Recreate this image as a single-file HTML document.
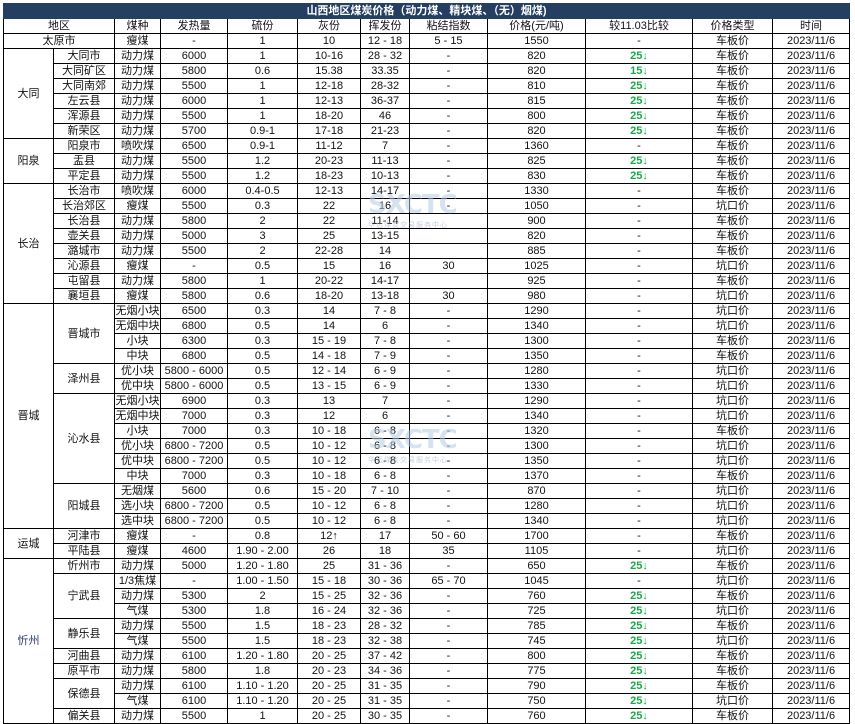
<!DOCTYPE html>
<html><head><meta charset="utf-8"><style>
body{margin:0;background:#fff;width:855px;height:712px;overflow:hidden;position:relative;font-family:"Liberation Sans","Noto Sans CJK SC",sans-serif;}
table{position:absolute;left:3px;top:3px;border-collapse:collapse;table-layout:fixed;width:846px;font-size:11px;color:#111;}
td{border:1px solid #000;padding:0;height:14px;line-height:14px;text-align:center;white-space:nowrap;overflow:hidden;}
tr{height:15px}
.t td{background:#243f62;color:#fff;font-weight:bold;border-color:#243f62;}
.g{color:#1aa84a;font-weight:bold;}
.wm{position:absolute;color:#b8cce4;font:bold 26px "DejaVu Sans",sans-serif;opacity:.55;letter-spacing:-1px;}
.wm span{display:block;font:7px "Noto Sans CJK SC",sans-serif;letter-spacing:1px;color:#9ab;}
</style></head><body>
<table>
<colgroup><col style="width:50px"><col style="width:61px"><col style="width:46px"><col style="width:67px"><col style="width:70px"><col style="width:63px"><col style="width:49px"><col style="width:78px"><col style="width:98px"><col style="width:107px"><col style="width:80px"><col style="width:77px"></colgroup>
<tr class="t"><td colspan="12">山西地区煤炭价格（动力煤、精块煤、（无）烟煤)</td></tr>
<tr><td colspan="2">地区</td><td>煤种</td><td>发热量</td><td>硫份</td><td>灰份</td><td>挥发份</td><td>粘结指数</td><td>价格(元/吨)</td><td>较11.03比较</td><td>价格类型</td><td>时间</td></tr>
<tr><td colspan="2">太原市</td><td>瘦煤</td><td>-</td><td>1</td><td>10</td><td>12 - 18</td><td>5 - 15</td><td>1550</td><td>-</td><td>车板价</td><td>2023/11/6</td></tr>
<tr><td rowspan="6">大同</td><td>大同市</td><td>动力煤</td><td>6000</td><td>1</td><td>10-16</td><td>28 - 32</td><td>-</td><td>820</td><td class="g">25↓</td><td>车板价</td><td>2023/11/6</td></tr>
<tr><td>大同矿区</td><td>动力煤</td><td>5800</td><td>0.6</td><td>15.38</td><td>33.35</td><td>-</td><td>820</td><td class="g">15↓</td><td>车板价</td><td>2023/11/6</td></tr>
<tr><td>大同南郊</td><td>动力煤</td><td>5500</td><td>1</td><td>12-18</td><td>28-32</td><td>-</td><td>810</td><td class="g">25↓</td><td>车板价</td><td>2023/11/6</td></tr>
<tr><td>左云县</td><td>动力煤</td><td>6000</td><td>1</td><td>12-13</td><td>36-37</td><td>-</td><td>815</td><td class="g">25↓</td><td>车板价</td><td>2023/11/6</td></tr>
<tr><td>浑源县</td><td>动力煤</td><td>5500</td><td>1</td><td>18-20</td><td>46</td><td>-</td><td>800</td><td class="g">25↓</td><td>车板价</td><td>2023/11/6</td></tr>
<tr><td>新荣区</td><td>动力煤</td><td>5700</td><td>0.9-1</td><td>17-18</td><td>21-23</td><td>-</td><td>820</td><td class="g">25↓</td><td>车板价</td><td>2023/11/6</td></tr>
<tr><td rowspan="3">阳泉</td><td>阳泉市</td><td>喷吹煤</td><td>6500</td><td>0.9-1</td><td>11-12</td><td>7</td><td>-</td><td>1360</td><td>-</td><td>车板价</td><td>2023/11/6</td></tr>
<tr><td>盂县</td><td>动力煤</td><td>5500</td><td>1.2</td><td>20-23</td><td>11-13</td><td>-</td><td>825</td><td class="g">25↓</td><td>车板价</td><td>2023/11/6</td></tr>
<tr><td>平定县</td><td>动力煤</td><td>5500</td><td>1.2</td><td>18-23</td><td>10-13</td><td>-</td><td>830</td><td class="g">25↓</td><td>车板价</td><td>2023/11/6</td></tr>
<tr><td rowspan="8">长治</td><td>长治市</td><td>喷吹煤</td><td>6000</td><td>0.4-0.5</td><td>12-13</td><td>14-17</td><td>-</td><td>1330</td><td>-</td><td>车板价</td><td>2023/11/6</td></tr>
<tr><td>长治郊区</td><td>瘦煤</td><td>5500</td><td>0.3</td><td>22</td><td>16</td><td>-</td><td>1050</td><td>-</td><td>坑口价</td><td>2023/11/6</td></tr>
<tr><td>长治县</td><td>动力煤</td><td>5800</td><td>2</td><td>22</td><td>11-14</td><td></td><td>900</td><td>-</td><td>车板价</td><td>2023/11/6</td></tr>
<tr><td>壶关县</td><td>动力煤</td><td>5000</td><td>3</td><td>25</td><td>13-15</td><td></td><td>820</td><td>-</td><td>车板价</td><td>2023/11/6</td></tr>
<tr><td>潞城市</td><td>动力煤</td><td>5500</td><td>2</td><td>22-28</td><td>14</td><td></td><td>885</td><td>-</td><td>车板价</td><td>2023/11/6</td></tr>
<tr><td>沁源县</td><td>瘦煤</td><td>-</td><td>0.5</td><td>15</td><td>16</td><td>30</td><td>1025</td><td>-</td><td>坑口价</td><td>2023/11/6</td></tr>
<tr><td>屯留县</td><td>动力煤</td><td>5800</td><td>1</td><td>20-22</td><td>14-17</td><td></td><td>925</td><td>-</td><td>车板价</td><td>2023/11/6</td></tr>
<tr><td>襄垣县</td><td>瘦煤</td><td>5800</td><td>0.6</td><td>18-20</td><td>13-18</td><td>30</td><td>980</td><td>-</td><td>坑口价</td><td>2023/11/6</td></tr>
<tr><td rowspan="15">晋城</td><td rowspan="4">晋城市</td><td>无烟小块</td><td>6500</td><td>0.3</td><td>14</td><td>7 - 8</td><td>-</td><td>1290</td><td>-</td><td>坑口价</td><td>2023/11/6</td></tr>
<tr><td>无烟中块</td><td>6800</td><td>0.5</td><td>14</td><td>6</td><td>-</td><td>1340</td><td>-</td><td>坑口价</td><td>2023/11/6</td></tr>
<tr><td>小块</td><td>6300</td><td>0.3</td><td>15 - 19</td><td>7 - 8</td><td>-</td><td>1300</td><td>-</td><td>车板价</td><td>2023/11/6</td></tr>
<tr><td>中块</td><td>6800</td><td>0.5</td><td>14 - 18</td><td>7 - 9</td><td>-</td><td>1350</td><td>-</td><td>车板价</td><td>2023/11/6</td></tr>
<tr><td rowspan="2">泽州县</td><td>优小块</td><td>5800 - 6000</td><td>0.5</td><td>12 - 14</td><td>6 - 9</td><td>-</td><td>1280</td><td>-</td><td>坑口价</td><td>2023/11/6</td></tr>
<tr><td>优中块</td><td>5800 - 6000</td><td>0.5</td><td>13 - 15</td><td>6 - 9</td><td>-</td><td>1330</td><td>-</td><td>坑口价</td><td>2023/11/6</td></tr>
<tr><td rowspan="6">沁水县</td><td>无烟小块</td><td>6900</td><td>0.3</td><td>13</td><td>7</td><td>-</td><td>1290</td><td>-</td><td>坑口价</td><td>2023/11/6</td></tr>
<tr><td>无烟中块</td><td>7000</td><td>0.3</td><td>12</td><td>6</td><td>-</td><td>1340</td><td>-</td><td>坑口价</td><td>2023/11/6</td></tr>
<tr><td>小块</td><td>7000</td><td>0.3</td><td>10 - 18</td><td>6 - 8</td><td>-</td><td>1320</td><td>-</td><td>车板价</td><td>2023/11/6</td></tr>
<tr><td>优小块</td><td>6800 - 7200</td><td>0.5</td><td>10 - 12</td><td>6 - 8</td><td>-</td><td>1300</td><td>-</td><td>坑口价</td><td>2023/11/6</td></tr>
<tr><td>优中块</td><td>6800 - 7200</td><td>0.5</td><td>10 - 12</td><td>6 - 8</td><td>-</td><td>1350</td><td>-</td><td>坑口价</td><td>2023/11/6</td></tr>
<tr><td>中块</td><td>7000</td><td>0.3</td><td>10 - 18</td><td>6 - 8</td><td>-</td><td>1370</td><td>-</td><td>车板价</td><td>2023/11/6</td></tr>
<tr><td rowspan="3">阳城县</td><td>无烟煤</td><td>5600</td><td>0.6</td><td>15 - 20</td><td>7 - 10</td><td>-</td><td>870</td><td>-</td><td>坑口价</td><td>2023/11/6</td></tr>
<tr><td>选小块</td><td>6800 - 7200</td><td>0.5</td><td>10 - 12</td><td>6 - 8</td><td>-</td><td>1280</td><td>-</td><td>坑口价</td><td>2023/11/6</td></tr>
<tr><td>选中块</td><td>6800 - 7200</td><td>0.5</td><td>10 - 12</td><td>6 - 8</td><td>-</td><td>1340</td><td>-</td><td>坑口价</td><td>2023/11/6</td></tr>
<tr><td rowspan="2">运城</td><td>河津市</td><td>瘦煤</td><td>-</td><td>0.8</td><td>12↑</td><td>17</td><td>50 - 60</td><td>1700</td><td>-</td><td>车板价</td><td>2023/11/6</td></tr>
<tr><td>平陆县</td><td>瘦煤</td><td>4600</td><td>1.90 - 2.00</td><td>26</td><td>18</td><td>35</td><td>1105</td><td>-</td><td>坑口价</td><td>2023/11/6</td></tr>
<tr><td rowspan="11" style="color:#2a3a6a">忻州</td><td>忻州市</td><td>动力煤</td><td>5000</td><td>1.20 - 1.80</td><td>25</td><td>31 - 36</td><td>-</td><td>650</td><td class="g">25↓</td><td>车板价</td><td>2023/11/6</td></tr>
<tr><td rowspan="3">宁武县</td><td>1/3焦煤</td><td>-</td><td>1.00 - 1.50</td><td>15 - 18</td><td>30 - 36</td><td>65 - 70</td><td>1045</td><td>-</td><td>坑口价</td><td>2023/11/6</td></tr>
<tr><td>动力煤</td><td>5300</td><td>2</td><td>15 - 25</td><td>32 - 36</td><td>-</td><td>760</td><td class="g">25↓</td><td>车板价</td><td>2023/11/6</td></tr>
<tr><td>气煤</td><td>5300</td><td>1.8</td><td>16 - 24</td><td>32 - 36</td><td>-</td><td>725</td><td class="g">25↓</td><td>坑口价</td><td>2023/11/6</td></tr>
<tr><td rowspan="2">静乐县</td><td>动力煤</td><td>5500</td><td>1.5</td><td>18 - 23</td><td>28 - 32</td><td>-</td><td>785</td><td class="g">25↓</td><td>车板价</td><td>2023/11/6</td></tr>
<tr><td>气煤</td><td>5500</td><td>1.5</td><td>18 - 23</td><td>32 - 38</td><td>-</td><td>745</td><td class="g">25↓</td><td>坑口价</td><td>2023/11/6</td></tr>
<tr><td>河曲县</td><td>动力煤</td><td>6100</td><td>1.20 - 1.80</td><td>20 - 25</td><td>37 - 42</td><td>-</td><td>800</td><td class="g">25↓</td><td>车板价</td><td>2023/11/6</td></tr>
<tr><td>原平市</td><td>动力煤</td><td>5800</td><td>1.8</td><td>20 - 23</td><td>34 - 36</td><td>-</td><td>775</td><td class="g">25↓</td><td>车板价</td><td>2023/11/6</td></tr>
<tr><td rowspan="2">保德县</td><td>动力煤</td><td>6100</td><td>1.10 - 1.20</td><td>20 - 25</td><td>31 - 35</td><td>-</td><td>790</td><td class="g">25↓</td><td>车板价</td><td>2023/11/6</td></tr>
<tr><td>气煤</td><td>6100</td><td>1.10 - 1.20</td><td>20 - 25</td><td>31 - 35</td><td>-</td><td>750</td><td class="g">25↓</td><td>坑口价</td><td>2023/11/6</td></tr>
<tr><td>偏关县</td><td>动力煤</td><td>5500</td><td>1</td><td>20 - 25</td><td>30 - 35</td><td>-</td><td>760</td><td class="g">25↓</td><td>车板价</td><td>2023/11/6</td></tr>
</table>
<div class="wm" style="left:368px;top:190px">SXCTC<span>华远煤炭交易服务中心</span></div>
<div class="wm" style="left:368px;top:425px">SXCTC<span>华远煤炭交易服务中心</span></div>
</body></html>
